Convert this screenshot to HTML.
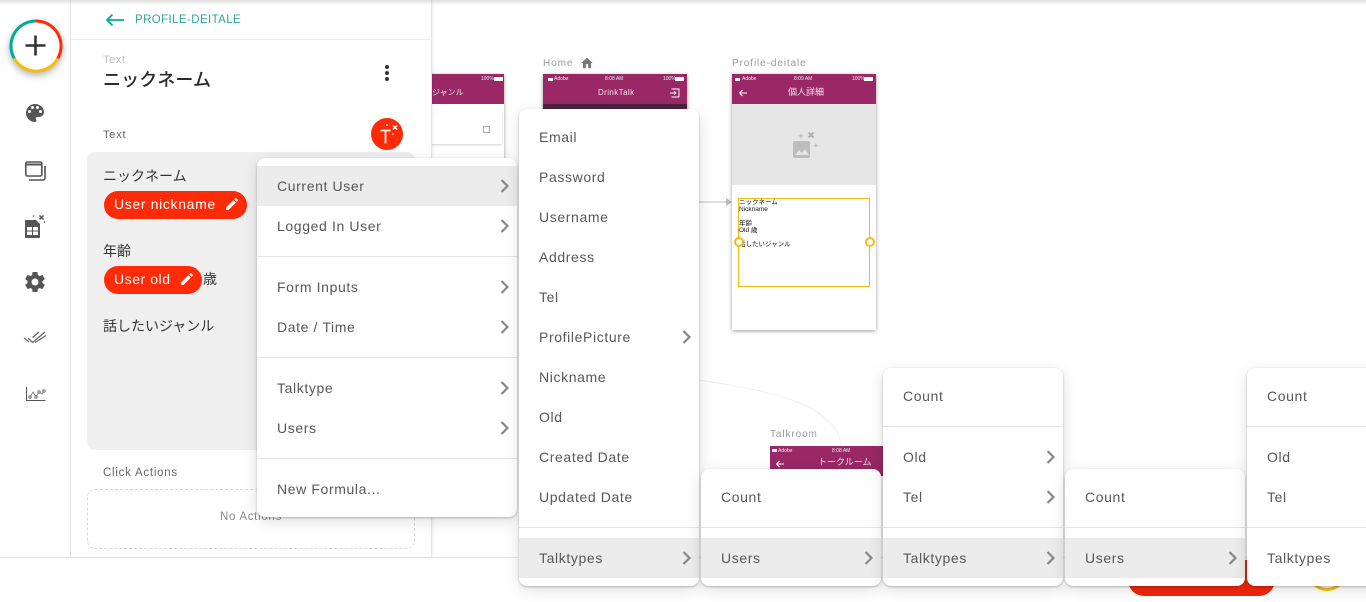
<!DOCTYPE html>
<html lang="ja"><head><meta charset="utf-8"><title>Profile-deitale</title>
<style>
*{box-sizing:border-box}
html,body{margin:0;padding:0;width:1366px;height:602px;overflow:hidden;background:#fff;font-family:"Liberation Sans","Noto Sans CJK JP",sans-serif;color:#333}
.a{position:absolute}
.t{position:absolute;white-space:nowrap;line-height:16px}
.menu{position:absolute;background:#fff;border-radius:8px;box-shadow:0 1px 2px rgba(0,0,0,.24),0 4px 16px rgba(0,0,0,.13);overflow:hidden}
.row{position:absolute;left:0;right:0;height:40px;line-height:40px;font-size:14px;letter-spacing:.62px;color:#585858;padding-left:20px;white-space:nowrap}
.row.h{background:#ececec}
.row svg{position:absolute;right:6px;top:12px}
.div{position:absolute;left:0;right:0;height:1px;background:#e4e4e4}
.chip{position:absolute;height:28px;background:#ff2a08;border-radius:14px;color:#fff;font-size:14px;letter-spacing:.65px;line-height:27px;padding-left:10px;white-space:nowrap}
.chip svg{position:absolute;top:5px}
.ph{position:absolute;background:#fff;box-shadow:0 1px 4px rgba(0,0,0,.4)}
.bar{position:absolute;left:0;right:0;background:#9a2866}
.lbl{position:absolute;font-size:10px;letter-spacing:.9px;color:#9a9a9a;white-space:nowrap;line-height:12px}
.st{position:absolute;font-size:5px;color:#eee;line-height:6px;white-space:nowrap}
</style></head><body>

<!-- canvas -->
<div class="lbl" style="left:543px;top:58px">Home</div>
<svg class="a" style="left:580px;top:56px" width="14" height="14" viewBox="0 0 24 24"><path fill="#777" d="M10 21v-7h4v7h5v-9h3L12 3 2 12h3v9z"/></svg>
<div class="lbl" style="left:732px;top:58px">Profile-deitale</div>
<div class="lbl" style="left:770px;top:429px">Talkroom</div>

<!-- screen 1 -->
<div class="ph" style="left:400px;top:74px;width:104px;height:120px">
  <div class="bar" style="top:0;height:30px"></div>
  <div class="t" style="left:24px;top:14px;font-size:8px;color:#eed;line-height:10px">しジャンル</div>
  <div class="st" style="left:81px;top:2px">100%</div>
  <div class="a" style="left:94px;top:3px;width:9px;height:4px;background:#fff"></div>
  <div class="a" style="left:0;top:40px;width:102px;height:30px;background:#fff;box-shadow:0 1px 2px rgba(0,0,0,.18)"></div>
  <div class="a" style="left:83px;top:52px;width:7px;height:7px;border:1px solid #aaa"></div>
</div>

<!-- screen home -->
<div class="ph" style="left:543px;top:74px;width:144px;height:60px">
  <div class="bar" style="top:0;height:30px"></div>
  <div class="bar" style="top:30px;height:30px;background:#4d2340"></div>
  <div class="a" style="left:5px;top:4px;width:5px;height:3px;background:#eee"></div>
  <div class="st" style="left:11px;top:2px">Adobe</div>
  <div class="st" style="left:62px;top:2px">8:08 AM</div>
  <div class="st" style="left:120px;top:2px">100%</div>
  <div class="a" style="left:132px;top:3px;width:9px;height:4px;background:#fff"></div>
  <div class="t" style="left:55px;top:14px;font-size:8px;letter-spacing:.4px;color:#f3e6ee;line-height:10px">DrinkTalk</div>
  <svg class="a" style="left:127px;top:14px" width="10" height="10" viewBox="0 0 10 10"><path d="M1.500 1h7.500v8h-7.500M0 5h5.500M4 3.200l2 1.800-2 1.800" fill="none" stroke="#fff" stroke-width=".9"/></svg>
</div>

<!-- connectors -->
<svg class="a" style="left:695px;top:195px" width="40" height="14"><path d="M4 7h28" stroke="#bbb" stroke-width="1"/><path d="M31 3l6 4-6 4z" fill="#bbb"/></svg>
<svg class="a" style="left:695px;top:375px" width="160" height="75"><path d="M4 5C60 14 140 25 146 70" fill="none" stroke="#eee" stroke-width="1"/></svg>

<!-- screen profile -->
<div class="ph" style="left:732px;top:74px;width:144px;height:256px">
  <div class="bar" style="top:0;height:30px"></div>
  <div class="a" style="left:3px;top:4px;width:5px;height:3px;background:#eee"></div>
  <div class="st" style="left:10px;top:2px">Adobe</div>
  <div class="st" style="left:62px;top:2px">8:09 AM</div>
  <div class="st" style="left:120px;top:2px">100%</div>
  <div class="a" style="left:132px;top:3px;width:9px;height:4px;background:#fff"></div>
  <svg class="a" style="left:6px;top:14px" width="10" height="10" viewBox="0 0 10 10"><path d="M9 5H1.500M4.500 2L1.500 5l3 3" fill="none" stroke="#fff" stroke-width="1"/></svg>
  <div class="t" style="left:56px;top:13px;font-size:9px;color:#f3e6ee;line-height:11px">個人詳細</div>
  <div class="a" style="left:0;top:30px;width:144px;height:81px;background:#e6e6e6"></div>
  <svg class="a" style="left:60px;top:56px" width="28" height="30" viewBox="0 0 28 30"><rect x="1" y="11" width="17" height="17" rx="2" fill="#bcbcbc"/><path d="M3 25l4-5 3 3 3-4 4 6z" fill="#e6e6e6"/><path d="M16.500 2.500l5 5M21.500 2.500l-5 5" stroke="#b0b0b0" stroke-width="2"/><path d="M9 3l.9 2.100 2.100.9-2.100.9-.9 2.100-.9-2.100-2.100-.9 2.100-.9zM24 13l.8 1.700 1.700.8-1.700.8-.8 1.700-.8-1.700-1.700-.8 1.700-.8z" fill="#c0c0c0"/></svg>
  <div class="a" style="left:6px;top:124px;width:132px;height:89px;border:1px solid #f6bb10"></div>
  <div class="t" style="left:7px;top:125px;font-size:6.500px;line-height:7px;color:#111">ニックネーム<br>Nickname<br><br>年齢<br>Old 歳<br><br>話したいジャンル</div>
  <div class="a" style="left:2px;top:163px;width:10px;height:10px;border:2px solid #f6bb10;border-radius:50%;background:#fff"></div>
  <div class="a" style="left:133px;top:163px;width:10px;height:10px;border:2px solid #f6bb10;border-radius:50%;background:#fff"></div>
</div>

<!-- talkroom -->
<div class="a" style="left:770px;top:446px;width:120px;height:30px;background:#9a2866"></div>
<div class="a" style="left:772px;top:449px;width:5px;height:3px;background:#eee"></div>
<div class="st" style="left:778px;top:447px;line-height:8px">Adobe</div>
<div class="st" style="left:832px;top:447px;line-height:8px">8:08 AM</div>
<svg class="a" style="left:775px;top:459px" width="10" height="10" viewBox="0 0 10 10"><path d="M9 5H1.500M4.500 2L1.500 5l3 3" fill="none" stroke="#fff" stroke-width="1"/></svg>
<div class="t" style="left:818px;top:457px;font-size:9px;color:#f3e6ee;line-height:11px">トークルーム</div>

<!-- bottom bar -->
<div class="a" style="left:0;top:557px;width:1366px;height:45px;background:#fff;border-top:1px solid #e4e4e4"></div>
<div class="a" style="left:1128px;top:560px;width:147px;height:36px;background:#f3270c;border-radius:0 0 16px 16px"></div>
<div class="a" style="left:1307px;top:551px;width:40px;height:40px;border:3px solid #f6bb10;border-radius:50%;background:#fff"></div>

<!-- left rail -->
<div class="a" style="left:0;top:0;width:71px;height:557px;background:#fff;border-right:1px solid #e8e8e8"></div>
<div class="a" style="left:10px;top:20px;width:52px;height:52px;border-radius:50%;box-shadow:0 3px 8px rgba(0,0,0,.35)"></div>
<svg class="a" style="left:9px;top:19px" width="54" height="54" viewBox="0 0 54 54">
<circle cx="27" cy="27" r="25" fill="#fff"/>
<path d="M27 2A25 25 0 0 1 48.700 39.500" fill="none" stroke="#ff2a08" stroke-width="3"/>
<path d="M48.700 39.500A25 25 0 0 1 5.300 39.500" fill="none" stroke="#fbbc05" stroke-width="3"/>
<path d="M5.300 39.500A25 25 0 0 1 27 2" fill="none" stroke="#00ad93" stroke-width="3"/>
<path d="M16.500 26.500h20M26.500 16.500v20" stroke="#333" stroke-width="2.600"/></svg>
<svg class="a" style="left:23px;top:101px" width="24" height="24" viewBox="0 0 24 24"><path fill="#555" d="M12 3a9 9 0 0 0 0 18c.83 0 1.500-.67 1.500-1.500 0-.39-.15-.74-.39-1.010-.23-.26-.38-.61-.38-.99 0-.83.67-1.500 1.500-1.500H16c2.760 0 5-2.240 5-5 0-4.420-4.030-8-9-8zm-5.500 9a1.500 1.500 0 1 1 0-3 1.500 1.500 0 0 1 0 3zm3-4a1.500 1.500 0 1 1 0-3 1.500 1.500 0 0 1 0 3zm5 0a1.500 1.500 0 1 1 0-3 1.500 1.500 0 0 1 0 3zm3 4a1.500 1.500 0 1 1 0-3 1.500 1.500 0 0 1 0 3z"/></svg>
<svg class="a" style="left:24px;top:160px" width="22" height="22" viewBox="0 0 22 22"><rect x="1.800" y="2" width="16" height="14" rx="1.500" fill="none" stroke="#555" stroke-width="1.600"/><path d="M2 4.500h16" stroke="#555" stroke-width="2"/><path d="M21 6v12a2 2 0 0 1-2 2H5" fill="none" stroke="#555" stroke-width="1.600"/></svg>
<svg class="a" style="left:24px;top:214px" width="22" height="26" viewBox="0 0 22 26"><path fill="#555" d="M2 6h10l4 4v13a1 1 0 0 1-1 1H2a1 1 0 0 1-1-1V7a1 1 0 0 1 1-1z"/><rect x="3" y="13" width="11" height="8" fill="#fff"/><path d="M8.500 13v8M3 17h11" stroke="#555" stroke-width="1"/><path d="M15.500 1.500l4 4M19.500 1.500l-4 4" stroke="#555" stroke-width="1.500"/><circle cx="9.500" cy="2" r=".8" fill="#555"/><circle cx="20.500" cy="8" r=".8" fill="#555"/></svg>
<svg class="a" style="left:23px;top:270px" width="24" height="24" viewBox="0 0 24 24"><path fill="#555" d="M19.430 12.980c.04-.32.070-.64.070-.98s-.03-.66-.07-.98l2.110-1.650c.19-.15.240-.42.120-.64l-2-3.460c-.12-.22-.39-.3-.61-.22l-2.490 1c-.52-.4-1.080-.73-1.690-.98l-.38-2.650A.49.490 0 0 0 14 2h-4c-.25 0-.46.180-.49.420l-.38 2.650c-.61.250-1.170.59-1.690.98l-2.490-1c-.23-.09-.49 0-.61.220l-2 3.460c-.13.220-.07.490.12.640l2.110 1.650c-.04.320-.07.650-.07.980s.03.660.07.980l-2.110 1.650c-.19.150-.24.420-.12.640l2 3.460c.12.220.39.300.61.220l2.490-1c.52.400 1.080.730 1.690.980l.38 2.650c.03.240.24.420.49.420h4c.25 0 .46-.180.49-.420l.38-2.650c.61-.250 1.170-.590 1.690-.980l2.490 1c.23.090.49 0 .61-.220l2-3.460c.12-.220.070-.490-.12-.640l-2.110-1.650zM12 15.500a3.500 3.500 0 1 1 0-7 3.500 3.500 0 0 1 0 7z"/></svg>
<svg class="a" style="left:23px;top:329px" width="24" height="18" viewBox="0 0 24 18"><path d="M1 9l5 4M5 9l4.500 4.500L22 3M9.500 8.500L16 3M12 13.500L23 6.500" fill="none" stroke="#666" stroke-width="1.300"/></svg>
<svg class="a" style="left:25px;top:385px" width="22" height="18" viewBox="0 0 22 18"><path d="M1.500 2v13.500H20.500" fill="none" stroke="#555" stroke-width="1"/><path d="M5 12l3-5 3 5 3-5 3 2 2-3" fill="none" stroke="#777" stroke-width=".8"/><circle cx="5" cy="12" r="1.200" fill="#fff" stroke="#555" stroke-width=".8"/><circle cx="11" cy="12" r="1.200" fill="#fff" stroke="#555" stroke-width=".8"/><circle cx="14" cy="7" r="1.200" fill="#fff" stroke="#555" stroke-width=".8"/><circle cx="19" cy="6" r="1.200" fill="#fff" stroke="#555" stroke-width=".8"/></svg>

<!-- panel -->
<div class="a" style="left:71px;top:0;width:361px;height:557px;background:#fff;border-right:1px solid #e6e6e6;box-shadow:1px 0 3px rgba(0,0,0,.08)"></div>
<div class="a" style="left:71px;top:39px;width:361px;height:1px;background:#ececec"></div>
<div class="a" style="left:0;top:0;width:1366px;height:5px;background:linear-gradient(rgba(0,0,0,.13),rgba(0,0,0,0))"></div>
<svg class="a" style="left:105px;top:12px" width="21" height="16" viewBox="0 0 21 16"><path d="M19 8H2M7.500 2.500L2 8l5.500 5.500" fill="none" stroke="#00ad93" stroke-width="1.700"/></svg>
<div class="t" style="left:135px;top:12px;font-size:11.500px;letter-spacing:.4px;color:#2fa99a">PROFILE-DEITALE</div>
<div class="t" style="left:103px;top:52px;font-size:11px;letter-spacing:.6px;color:#bdbdbd">Text</div>
<div class="t" style="left:103px;top:69px;font-size:18px;line-height:22px;color:#2b2b2b;font-weight:500;letter-spacing:.1px">ニックネーム</div>
<svg class="a" style="left:384px;top:65px" width="6" height="16"><circle cx="3" cy="2" r="2" fill="#333"/><circle cx="3" cy="8" r="2" fill="#333"/><circle cx="3" cy="14" r="2" fill="#333"/></svg>
<div class="t" style="left:103px;top:127px;font-size:11px;letter-spacing:.8px;color:#666">Text</div>
<svg class="a" style="left:371px;top:118px" width="32" height="32" viewBox="0 0 32 32"><circle cx="16" cy="16" r="16" fill="#ff2a08"/><path d="M9.500 12.500h10M14.500 12.500v13" stroke="#fff" stroke-width="1.700"/><path d="M22 7.500l4 4M26 7.500l-4 4" stroke="#fff" stroke-width="1.500"/><circle cx="16" cy="7" r=".9" fill="#fff"/><circle cx="22" cy="16" r=".9" fill="#fff"/></svg>

<div class="a" style="left:87px;top:152px;width:328px;height:298px;background:#efefef;border-radius:8px"></div>
<div class="t" style="left:103px;top:168px;font-size:14px;color:#333">ニックネーム</div>
<div class="chip" style="left:104px;top:191px;width:143px">User nickname<svg style="left:120px" width="16" height="16" viewBox="0 0 24 24"><path fill="#fff" d="M3 17.250V21h3.750L17.810 9.940l-3.750-3.750L3 17.250zM20.710 7.040a1 1 0 0 0 0-1.410l-2.340-2.340a1 1 0 0 0-1.410 0l-1.830 1.830 3.750 3.750 1.830-1.830z"/></svg></div>
<div class="t" style="left:103px;top:243px;font-size:14px;color:#333">年齢</div>
<div class="chip" style="left:104px;top:266px;width:98px;letter-spacing:.55px">User old<svg style="left:75px" width="16" height="16" viewBox="0 0 24 24"><path fill="#fff" d="M3 17.250V21h3.750L17.810 9.940l-3.750-3.750L3 17.250zM20.710 7.040a1 1 0 0 0 0-1.410l-2.340-2.340a1 1 0 0 0-1.410 0l-1.830 1.830 3.750 3.750 1.830-1.830z"/></svg></div>
<div class="t" style="left:203px;top:271px;font-size:14px;color:#333">歳</div>
<div class="t" style="left:103px;top:318px;font-size:14px;color:#333">話したいジャンル</div>

<div class="t" style="left:103px;top:465px;font-size:11.500px;letter-spacing:.75px;color:#666">Click Actions</div>
<div class="a" style="left:87px;top:489px;width:328px;height:60px;border:1px dashed #d8d8d8;border-radius:8px"></div>
<div class="t" style="left:220px;top:509px;font-size:11.500px;letter-spacing:.7px;color:#8a8a8a">No Actions</div>

<svg width="0" height="0" style="position:absolute"><defs><symbol id="c" viewBox="0 0 12 16"><path d="M2.500 2l6 6-6 6" fill="none" stroke="#888" stroke-width="2.200"/></symbol></defs></svg>

<!-- menu 1 -->
<div class="menu" style="left:257px;top:158px;width:260px;height:359px">
  <div class="row h" style="top:8px">Current User<svg width="12" height="16"><use href="#c"/></svg></div>
  <div class="row" style="top:48px">Logged In User<svg width="12" height="16"><use href="#c"/></svg></div>
  <div class="div" style="top:98px"></div>
  <div class="row" style="top:109px">Form Inputs<svg width="12" height="16"><use href="#c"/></svg></div>
  <div class="row" style="top:149px">Date / Time<svg width="12" height="16"><use href="#c"/></svg></div>
  <div class="div" style="top:199px"></div>
  <div class="row" style="top:210px">Talktype<svg width="12" height="16"><use href="#c"/></svg></div>
  <div class="row" style="top:250px">Users<svg width="12" height="16"><use href="#c"/></svg></div>
  <div class="div" style="top:300px"></div>
  <div class="row" style="top:311px">New Formula...</div>
</div>

<!-- menu 2 -->
<div class="menu" style="left:519px;top:109px;width:180px;height:477px">
  <div class="row" style="top:8px">Email</div>
  <div class="row" style="top:48px">Password</div>
  <div class="row" style="top:88px">Username</div>
  <div class="row" style="top:128px">Address</div>
  <div class="row" style="top:168px">Tel</div>
  <div class="row" style="top:208px">ProfilePicture<svg width="12" height="16"><use href="#c"/></svg></div>
  <div class="row" style="top:248px">Nickname</div>
  <div class="row" style="top:288px">Old</div>
  <div class="row" style="top:328px">Created Date</div>
  <div class="row" style="top:368px">Updated Date</div>
  <div class="div" style="top:418px"></div>
  <div class="row h" style="top:429px">Talktypes<svg width="12" height="16"><use href="#c"/></svg></div>
</div>

<!-- menu 3 -->
<div class="menu" style="left:701px;top:469px;width:180px;height:117px">
  <div class="row" style="top:8px">Count</div>
  <div class="div" style="top:58px"></div>
  <div class="row h" style="top:69px">Users<svg width="12" height="16"><use href="#c"/></svg></div>
</div>

<!-- menu 4 -->
<div class="menu" style="left:883px;top:368px;width:180px;height:218px">
  <div class="row" style="top:8px">Count</div>
  <div class="div" style="top:58px"></div>
  <div class="row" style="top:69px">Old<svg width="12" height="16"><use href="#c"/></svg></div>
  <div class="row" style="top:109px">Tel<svg width="12" height="16"><use href="#c"/></svg></div>
  <div class="div" style="top:159px"></div>
  <div class="row h" style="top:170px">Talktypes<svg width="12" height="16"><use href="#c"/></svg></div>
</div>

<!-- menu 5 -->
<div class="menu" style="left:1065px;top:469px;width:180px;height:117px">
  <div class="row" style="top:8px">Count</div>
  <div class="div" style="top:58px"></div>
  <div class="row h" style="top:69px">Users<svg width="12" height="16"><use href="#c"/></svg></div>
</div>

<!-- menu 6 -->
<div class="menu" style="left:1247px;top:368px;width:180px;height:218px">
  <div class="row" style="top:8px">Count</div>
  <div class="div" style="top:58px"></div>
  <div class="row" style="top:69px">Old</div>
  <div class="row" style="top:109px">Tel</div>
  <div class="div" style="top:159px"></div>
  <div class="row" style="top:170px">Talktypes</div>
</div>
</body></html>
